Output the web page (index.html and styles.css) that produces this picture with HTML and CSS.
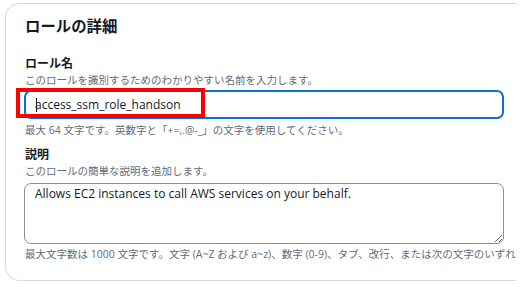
FILE: index.html
```html
<!DOCTYPE html>
<html lang="ja">
<head>
  <meta charset="UTF-8" />
  <title>ロールの詳細</title>
  <link rel="stylesheet" href="styles.css">
</head>
<body>
  <div class="frame">
    <section class="card">
      <h2>ロールの詳細</h2>

      <div class="field">
        <label for="roleName">ロール名</label>
        <p class="desc">このロールを識別するためのわかりやすい名前を入力します。</p>
        <div class="input-wrap">
          <input type="text" id="roleName" class="text-input" value="access_ssm_role_handson" />
          <span class="caret"></span>
          <span class="highlight"></span>
        </div>
        <p class="hint">最大 64 文字です。英数字と「+=,.@-_」の文字を使用してください。</p>
      </div>

      <div class="field">
        <label for="roleDesc">説明</label>
        <p class="desc">このロールの簡単な説明を追加します。</p>
        <textarea id="roleDesc" class="text-area">Allows EC2 instances to call AWS services on your behalf.</textarea>
        <p class="hint nowrap">最大文字数は 1000 文字です。文字 (A~Z および a~z)、数字 (0-9)、タブ、改行、または次の文字のいずれかを使用できます: _+=,.@-</p>
      </div>
    </section>
  </div>
</body>
</html>
```

FILE: styles.css
```css
body {
  margin: 0;
  background: #fff;
  font-family: "Open Sans", "Noto Sans CJK JP", sans-serif;
  color: #16191f;
}
.frame {
  width: 516px;
  height: 287px;
  overflow: hidden;
  padding: 3px 0 0 5px;
  box-sizing: border-box;
}
.card {
  width: 560px;
  height: 278px;
  box-sizing: border-box;
  border: 1px solid #d5d8dc;
  border-radius: 14px;
  padding: 13px 19px 0 19px;
  background: #fff;
}
h2 {
  margin: 0 0 19px;
  font-size: 15.4px;
  line-height: 20px;
  font-weight: 700;
}
.field {
  margin-bottom: 10px;
}
label {
  display: block;
  font-size: 12px;
  font-weight: 700;
  line-height: 16px;
}
.desc,
.hint {
  margin: 0;
  font-size: 10.5px;
  line-height: 16px;
  color: #5f6b7a;
}
.hint {
  line-height: 14px;
}
.nowrap {
  white-space: nowrap;
}
.input-wrap {
  position: relative;
  margin: 2px 0 4px -1px;
  width: 480px;
}
.text-input {
  display: block;
  width: 480px;
  height: 29px;
  box-sizing: border-box;
  border: 2px solid #0972d3;
  border-radius: 7px;
  padding: 0 9px;
  font-family: inherit;
  font-size: 12px;
  color: #16191f;
  outline: none;
}
.caret {
  position: absolute;
  left: 12px;
  top: 8px;
  width: 1px;
  height: 14px;
  background: #16191f;
}
.highlight {
  position: absolute;
  left: -8px;
  top: -2px;
  width: 189px;
  height: 30px;
  box-sizing: border-box;
  border: 4px solid #ff0000;
}
.text-area {
  display: block;
  width: 480px;
  height: 61px;
  box-sizing: border-box;
  margin: 4px 0 3px -1px;
  border: 1px solid #8c8c94;
  border-radius: 7px;
  padding: 2px 10px;
  font-family: inherit;
  font-size: 12px;
  line-height: 16px;
  color: #16191f;
  resize: vertical;
}
```
